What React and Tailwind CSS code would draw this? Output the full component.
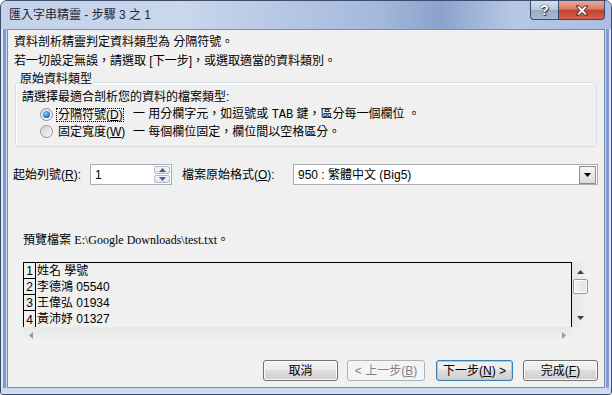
import React from 'react';

// 按鈕
const Btn = ({ children, className = '', focused, disabled }) => (
  <div
    className={`h-[21px] flex items-center justify-center whitespace-nowrap rounded-[3px] border text-[12px] leading-none ${className} ${
      disabled
        ? 'border-[#adb2b5] bg-[#f4f4f4] text-[#838383]'
        : focused
        ? 'border-[#3c7fb1] bg-[linear-gradient(#f2f2f2_0%,#ebebeb_50%,#dddddd_50%,#cfcfcf_100%)] shadow-[inset_0_0_0_1px_#8fd3f5] text-black'
        : 'border-[#707070] bg-[linear-gradient(#f2f2f2_0%,#ebebeb_50%,#dddddd_50%,#cfcfcf_100%)] shadow-[inset_0_0_0_1px_#fcfcfc] text-black'
    }`}
  >
    {children}
  </div>
);

const Radio = ({ checked }) => (
  <div className="w-[13px] h-[13px] shrink-0 rounded-full border border-[#8e8f8f] bg-[linear-gradient(135deg,#d9dbdc,#fbfbfb)] flex items-center justify-center">
    {checked ? (
      <div className="w-[7px] h-[7px] rounded-full bg-[radial-gradient(circle_at_40%_35%,#8ed1ff,#2a6fd0_60%,#0f3f8f)]" />
    ) : (
      <div className="w-[9px] h-[9px] rounded-full bg-[linear-gradient(135deg,#cfd1d3,#f4f4f4)]" />
    )}
  </div>
);

const Tri = ({ dir = 'down', color = '#000' }) => (
  <svg width="7" height="4" viewBox="0 0 7 4">
    {dir === 'down' ? <path d="M0 0h7L3.5 4z" fill={color} /> : <path d="M0 4h7L3.5 0z" fill={color} />}
  </svg>
);

const rows = [
  ['1', '姓名 學號'],
  ['2', '李德鴻 05540'],
  ['3', '王偉弘 01934'],
  ['4', '黃沛妤 01327'],
];

export default function App() {
  return (
    <div className="w-[612px] h-[395px] bg-white font-['Liberation_Sans','Noto_Sans_CJK_TC',sans-serif] text-[12px] text-black whitespace-nowrap">
      <div className="w-[612px] h-[395px] flex flex-col overflow-hidden rounded-t-[7px] rounded-b-[3px] border border-[#3d4c69] bg-[#c6d4ec]">
        {/* 標題列 */}
        <div className="h-[28px] shrink-0 flex justify-between items-start bg-[linear-gradient(to_right,#c4d2ea_0%,#c9d6ec_30%,#b2c4e4_50%,#a3b8dc_62%,#8ba2cc_72%,#b6c8e6_84%,#a9bee2_100%)]">
          <div className="pl-[8px] pt-[7px] leading-[14px] text-[12px] text-[#1b2536]">匯入字串精靈 - 步驟 3 之 1</div>
          <div className="flex mr-[6px] h-[19px]">
            <div className="w-[29px] h-[19px] rounded-bl-[4px] border border-t-0 border-[#3b4a66] bg-[linear-gradient(#d5dfec_0%,#b9c7da_50%,#97a9c3_52%,#a9bad2_100%)] flex items-center justify-center text-white font-bold text-[14px] leading-none [text-shadow:0_0_1px_#2a3448,0_0_1px_#2a3448,1px_1px_1px_#2a3448]">
              ?
            </div>
            <div className="w-[46px] h-[19px] rounded-br-[4px] border border-t-0 border-l-0 border-[#3b4a66] bg-[linear-gradient(#e9a99a_0%,#d87a67_45%,#c4412c_52%,#d2604b_100%)] flex items-center justify-center">
              <svg width="14" height="11" viewBox="0 0 14 11">
                <path d="M1 1h3.5l2.5 2.6L9.5 1H13L9 5.5 13 10H9.5L7 7.4 4.5 10H1l4-4.5z" fill="#fff" stroke="#3a2a2a" strokeWidth="1" strokeLinejoin="round" />
              </svg>
            </div>
          </div>
        </div>

        <div className="flex flex-1">
          {/* 左框 */}
          <div className="w-[6px] bg-[linear-gradient(to_right,#dfe7f4_0px,#dfe7f4_2px,#7d9cd4_2px,#7d9cd4_5px,#c8d6ed_5px)]" />

          {/* 視窗內容 */}
          <div className="w-[598px] h-[359px] border border-[#7f8ca6] bg-[#f0f0f0] flex flex-col">
            <div className="mt-[3px] ml-[6px] leading-[19px]">資料剖析精靈判定資料類型為 分隔符號。</div>
            <div className="ml-[6px] leading-[19px]">若一切設定無誤，請選取 [下一步]，或選取適當的資料類別。</div>

            {/* 原始資料類型 */}
            <div className="mt-[11px] ml-[7px] w-[582px] h-[65px] shrink-0 border border-[#d5dfe5] rounded-[3px] shadow-[inset_1px_1px_0_#fff] flex flex-col">
              <div className="-mt-[11px] ml-[3px] px-[1px] w-fit bg-[#f0f0f0] leading-[14px]">原始資料類型</div>
              <div className="mt-[4px] ml-[6px] leading-[14px]">請選擇最適合剖析您的資料的檔案類型:</div>
              <div className="mt-[2px] h-[17px] flex items-center">
                <div className="ml-[24px]"><Radio checked /></div>
                <div className="ml-[3px] w-[68px] h-[14px] shrink-0 border border-dotted border-black flex items-center pl-[1px] leading-none">
                  分隔符號(<u>D</u>)
                </div>
                <div className="ml-[9px]">一 用分欄字元，如逗號或 <span className="font-['Liberation_Mono']">TAB</span> 鍵，區分每一個欄位 。</div>
              </div>
              <div className="h-[17px] flex items-center">
                <div className="ml-[24px]"><Radio /></div>
                <div className="ml-[5px] w-[75px] shrink-0 leading-none">固定寬度(<u>W</u>)</div>
                <div>一 每個欄位固定，欄位間以空格區分。</div>
              </div>
            </div>

            {/* 起始列號 / 檔案原始格式 */}
            <div className="mt-[17px] h-[21px] flex items-center">
              <div className="ml-[5px] w-[77px] shrink-0">起始列號(<u>R</u>):</div>
              <div className="w-[82px] h-[21px] shrink-0 border border-[#abadb3] bg-white flex items-center justify-between">
                <span className="pl-[4px]">1</span>
                <div className="w-[16px] h-[17px] mr-[1px] flex flex-col gap-[1px]">
                  <div className="flex-1 border border-[#b5bcc7] rounded-[2px] bg-[linear-gradient(#f2f5fa,#dde4ee)] flex items-center justify-center"><Tri dir="up" color="#4a5e80" /></div>
                  <div className="flex-1 border border-[#b5bcc7] rounded-[2px] bg-[linear-gradient(#f2f5fa,#dde4ee)] flex items-center justify-center"><Tri color="#4a5e80" /></div>
                </div>
              </div>
              <div className="ml-[10px] w-[111px] shrink-0">檔案原始格式(<u>O</u>):</div>
              <div className="w-[305px] h-[21px] shrink-0 border border-[#abadb3] bg-white flex items-center justify-between">
                <span className="pl-[4px]">950 : 繁體中文 (Big5)</span>
                <div className="w-[17px] h-[18px] mr-[1px] border border-[#8f8f8f] bg-[linear-gradient(#f6f6f6,#dadada)] flex items-center justify-center">
                  <Tri />
                </div>
              </div>
            </div>

            <div className="mt-[48px] ml-[15px] leading-[14px]">
              預覽檔案 <span className="font-['Liberation_Serif']">E:\Google Downloads\test.txt</span>。
            </div>

            {/* 預覽 */}
            <div className="mt-[15px] ml-[15px] grid grid-cols-[549px_17px] grid-rows-[65px_16px]">
              <div className="border-t border-l border-r border-black overflow-hidden">
                {rows.map(([n, t], i) => (
                  <div key={n} className="h-[16px] flex">
                    <div className={`w-[12px] shrink-0 border-r border-black flex items-end justify-center text-[12px] leading-[13px] ${i < 3 ? 'border-b' : ''}`}>
                      {n}
                    </div>
                    <div className="pl-[1px] leading-[16px] whitespace-pre">{t}</div>
                  </div>
                ))}
              </div>
              <div className="bg-[linear-gradient(to_right,#e6e6e6,#f2f2f2)] flex flex-col items-center">
                <div className="mt-[8px]"><Tri dir="up" color="#404040" /></div>
                <div className="mt-[5px] w-[15px] h-[15px] rounded-[2px] border border-[#979797] bg-[linear-gradient(to_right,#f3f3f3,#e2e2e2)] shadow-[inset_0_0_0_1px_#fff]" />
                <div className="mt-[22px]"><Tri color="#404040" /></div>
              </div>
              <div className="bg-[linear-gradient(#e8e8e8,#f3f3f3)] flex items-center justify-between px-[6px]">
                <svg width="4" height="7" viewBox="0 0 4 7"><path d="M4 0v7L0 3.5z" fill="#9a9a9a" /></svg>
                <svg width="4" height="7" viewBox="0 0 4 7"><path d="M0 0v7l4-3.5z" fill="#9a9a9a" /></svg>
              </div>
              <div />
            </div>

            {/* 按鈕 */}
            <div className="mt-[17px] pr-[6px] flex justify-end">
              <Btn className="w-[75px]">取消</Btn>
              <Btn className="ml-[9px] w-[78px]" disabled>&lt; 上一步(<u>B</u>)</Btn>
              <Btn className="ml-[11px] w-[77px]" focused>下一步(<u>N</u>) &gt;</Btn>
              <Btn className="ml-[10px] w-[75px]">完成(<u>F</u>)</Btn>
            </div>
          </div>

          {/* 右框 */}
          <div className="w-[6px] bg-[linear-gradient(to_left,#dfe7f4_0px,#dfe7f4_2px,#7d9cd4_2px,#7d9cd4_5px,#c8d6ed_5px)]" />
        </div>
        {/* 下框 */}
        <div className="h-[6px] shrink-0 bg-[linear-gradient(#c8d6ed,#d6e0f0)]" />
      </div>
    </div>
  );
}
